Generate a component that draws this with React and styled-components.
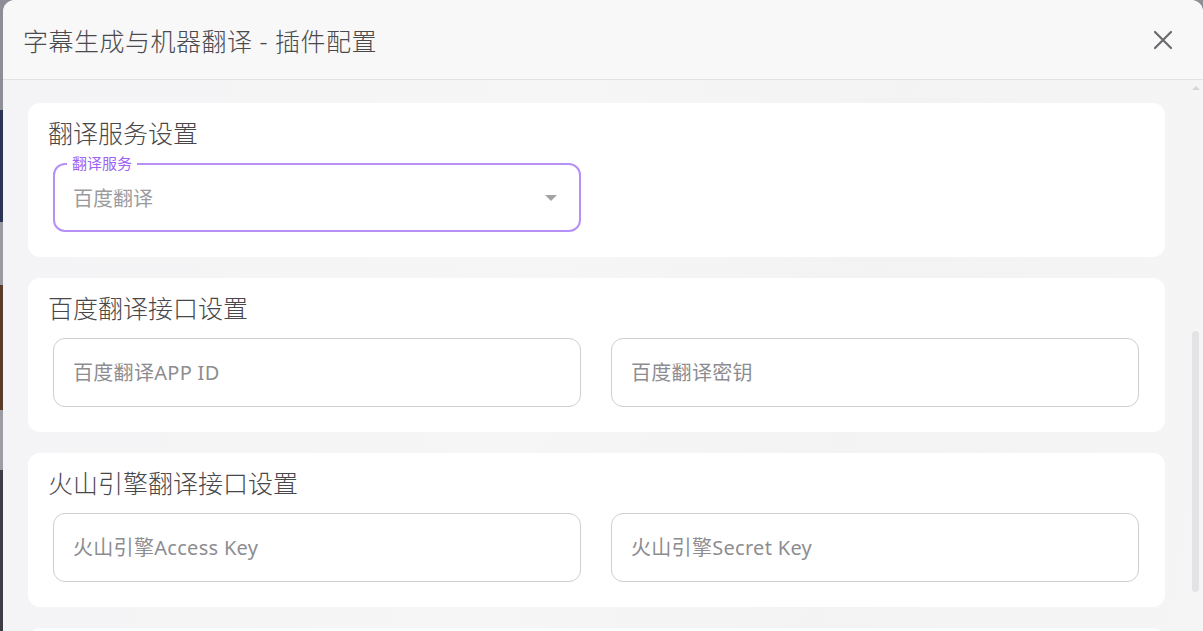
import React from 'react';
import styled, { createGlobalStyle } from 'styled-components';

const GlobalStyles = createGlobalStyle`
	html, body {
		margin: 0;
		height: 100%;
		overflow: hidden;
	}

	body {
		font-family: 'Noto Sans', 'Noto Sans CJK SC', sans-serif;
		/* whatever sits behind the modal, only a sliver shows on the left */
		background: linear-gradient(
			to bottom,
			#8e8e96 0,
			#8e8e96 110px,
			#2c3456 110px,
			#2c3456 222px,
			#9b9aa1 222px,
			#9b9aa1 285px,
			#5b3b29 285px,
			#5b3b29 410px,
			#9d9ca2 410px,
			#9d9ca2 470px,
			#3c3d45 470px
		);
	}
`;

const SECTIONS = [
	{
		title: '翻译服务设置',
		fields: [{ kind: 'select', label: '翻译服务', value: '百度翻译' }],
	},
	{
		title: '百度翻译接口设置',
		fields: [
			{ kind: 'input', placeholder: '百度翻译APP ID' },
			{ kind: 'input', placeholder: '百度翻译密钥' },
		],
	},
	{
		title: '火山引擎翻译接口设置',
		fields: [
			{ kind: 'input', placeholder: '火山引擎Access Key' },
			{ kind: 'input', placeholder: '火山引擎Secret Key' },
		],
	},
	{ title: '', fields: [] },
];

const CloseIcon = () => (
	<svg width='20' height='20' viewBox='0 0 20 20' fill='none'>
		<path d='M2 2 L18 18 M18 2 L2 18' stroke='#6a6a6e' strokeWidth='2.2' strokeLinecap='round' />
	</svg>
);

const SelectField = ({ label, value }) => (
	<SelectBox>
		<Legend>{label}</Legend>
		<SelectValue>{value}</SelectValue>
		<Caret />
	</SelectBox>
);

export default function App() {
	return (
		<>
			<GlobalStyles />
			<Dialog>
				<Header>
					<h2>字幕生成与机器翻译 - 插件配置</h2>
					<CloseButton aria-label='关闭'>
						<CloseIcon />
					</CloseButton>
				</Header>
				<Body>
					{SECTIONS.map((section, i) => (
						<Card key={i}>
							<CardTitle>{section.title}</CardTitle>
							<FieldGrid>
								{section.fields.map((field, j) =>
									field.kind === 'select' ? (
										<SelectField key={j} label={field.label} value={field.value} />
									) : (
										<TextInput key={j} placeholder={field.placeholder} />
									)
								)}
							</FieldGrid>
						</Card>
					))}
					<ScrollTrack>
						<ScrollArrow />
						<ScrollThumb />
					</ScrollTrack>
				</Body>
			</Dialog>
		</>
	);
}

const Dialog = styled.div`
	margin-left: 3px;
	height: 100vh;
	display: flex;
	flex-direction: column;
	background: linear-gradient(100deg, #f4f4f6 0%, #f6f6f6 45%, #f3f3f4 70%, #f5f5f6 100%);
	border-radius: 12px 12px 0 0;
	overflow: hidden;
`;

const Header = styled.header`
	flex: 0 0 79px;
	display: flex;
	align-items: center;
	justify-content: space-between;
	padding: 0 20px;
	background: #f8f8f9;
	border-bottom: 1px solid #e3e3e6;

	h2 {
		margin: 0;
		font-size: 25px;
		font-weight: 300;
		color: #4a4a4d;
		letter-spacing: 0.5px;
	}
`;

const CloseButton = styled.button`
	display: flex;
	align-items: center;
	justify-content: center;
	width: 32px;
	height: 32px;
	margin-right: 4px;
	padding: 0;
	border: none;
	background: transparent;
	cursor: pointer;
`;

const Body = styled.div`
	position: relative;
	flex: 1;
	overflow: hidden;
	padding: 23px 38px 0 25px;
	display: flex;
	flex-direction: column;
	gap: 21px;
`;

const Card = styled.section`
	flex: 0 0 auto;
	background: #ffffff;
	border-radius: 12px;
	padding: 14px 0 25px;
`;

const CardTitle = styled.h3`
	margin: 0 0 14px;
	padding: 0 20px;
	font-size: 25px;
	line-height: 32px;
	font-weight: 300;
	color: #48484b;
`;

const FieldGrid = styled.div`
	display: grid;
	grid-template-columns: 1fr 1fr;
	column-gap: 30px;
	padding: 0 26px 0 25px;
`;

const SelectBox = styled.div`
	position: relative;
	box-sizing: border-box;
	height: 69px;
	display: flex;
	align-items: center;
	padding: 0 18px;
	border: 2px solid #b690f4;
	border-radius: 12px;
`;

const Legend = styled.span`
	position: absolute;
	top: -10px;
	left: 12px;
	padding: 0 5px;
	background: #ffffff;
	font-size: 15px;
	line-height: 17px;
	color: #a062f4;
`;

const SelectValue = styled.span`
	flex: 1;
	font-size: 20px;
	color: #9b9b9e;
`;

const Caret = styled.span`
	width: 0;
	height: 0;
	margin-right: 4px;
	border-left: 6px solid transparent;
	border-right: 6px solid transparent;
	border-top: 6px solid #a3a3a6;
`;

const TextInput = styled.input`
	box-sizing: border-box;
	height: 69px;
	width: 100%;
	padding: 0 19px;
	border: 1px solid #cfcfd2;
	border-radius: 12px;
	background: #ffffff;
	font-family: inherit;
	font-size: 20px;
	letter-spacing: 0.3px;
	color: #333;
	outline: none;

	&::placeholder {
		color: #8d8d91;
	}
`;

const ScrollTrack = styled.div`
	position: absolute;
	top: 0;
	right: 4px;
	bottom: 0;
	width: 7px;
`;

const ScrollArrow = styled.span`
	position: absolute;
	top: 6px;
	left: 0;
	width: 0;
	height: 0;
	border-left: 4px solid transparent;
	border-right: 4px solid transparent;
	border-bottom: 4px solid #d6d6d9;
`;

const ScrollThumb = styled.span`
	position: absolute;
	top: 251px;
	left: 0;
	width: 7px;
	height: 261px;
	border-radius: 4px;
	background: #e3e3e6;
`;
